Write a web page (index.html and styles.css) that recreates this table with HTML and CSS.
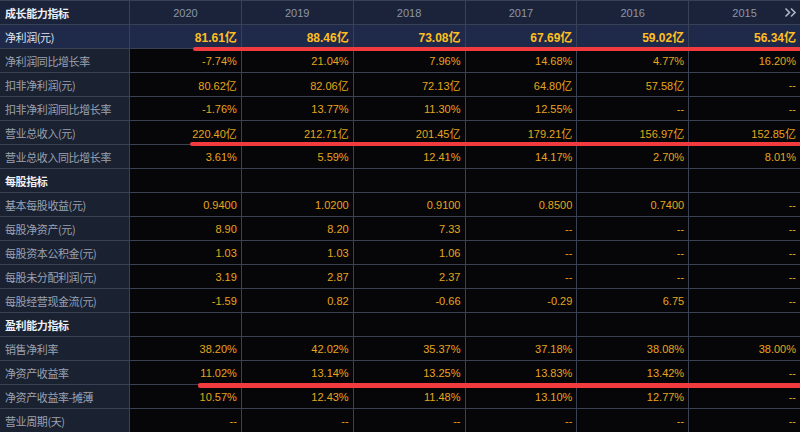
FILE: index.html
```html
<!DOCTYPE html>
<html lang="zh-CN">
<head>
<meta charset="utf-8">
<title>成长能力指标</title>
<link rel="stylesheet" href="styles.css">
</head>
<body>
<div class="board">
  <div class="grid">
    <div class="row head">
      <div class="lbl sec">成长能力指标</div>
      <div class="yr">2020</div><div class="yr">2019</div><div class="yr">2018</div><div class="yr">2017</div><div class="yr">2016</div>
      <div class="yr last">2015<span class="more"><svg width="13" height="11" viewBox="0 0 13 11"><path d="M1.5 1.5 L5.5 5.5 L1.5 9.5 M7 1.5 L11 5.5 L7 9.5" fill="none" stroke="#aeb6c6" stroke-width="1.6"/></svg></span></div>
    </div>
    <div class="row hl">
      <div class="lbl main">净利润(元)</div>
      <div class="v">81.61亿</div><div class="v">88.46亿</div><div class="v">73.08亿</div><div class="v">67.69亿</div><div class="v">59.02亿</div><div class="v">56.34亿</div>
    </div>
    <div class="row">
      <div class="lbl">净利润同比增长率</div>
      <div class="v">-7.74%</div><div class="v">21.04%</div><div class="v">7.96%</div><div class="v">14.68%</div><div class="v">4.77%</div><div class="v">16.20%</div>
    </div>
    <div class="row">
      <div class="lbl">扣非净利润(元)</div>
      <div class="v">80.62亿</div><div class="v">82.06亿</div><div class="v">72.13亿</div><div class="v">64.80亿</div><div class="v">57.58亿</div><div class="v">--</div>
    </div>
    <div class="row">
      <div class="lbl">扣非净利润同比增长率</div>
      <div class="v">-1.76%</div><div class="v">13.77%</div><div class="v">11.30%</div><div class="v">12.55%</div><div class="v">--</div><div class="v">--</div>
    </div>
    <div class="row">
      <div class="lbl">营业总收入(元)</div>
      <div class="v">220.40亿</div><div class="v">212.71亿</div><div class="v">201.45亿</div><div class="v">179.21亿</div><div class="v">156.97亿</div><div class="v">152.85亿</div>
    </div>
    <div class="row">
      <div class="lbl">营业总收入同比增长率</div>
      <div class="v">3.61%</div><div class="v">5.59%</div><div class="v">12.41%</div><div class="v">14.17%</div><div class="v">2.70%</div><div class="v">8.01%</div>
    </div>
    <div class="row">
      <div class="lbl sec">每股指标</div>
      <div class="v"></div><div class="v"></div><div class="v"></div><div class="v"></div><div class="v"></div><div class="v"></div>
    </div>
    <div class="row">
      <div class="lbl">基本每股收益(元)</div>
      <div class="v">0.9400</div><div class="v">1.0200</div><div class="v">0.9100</div><div class="v">0.8500</div><div class="v">0.7400</div><div class="v">--</div>
    </div>
    <div class="row">
      <div class="lbl">每股净资产(元)</div>
      <div class="v">8.90</div><div class="v">8.20</div><div class="v">7.33</div><div class="v">--</div><div class="v">--</div><div class="v">--</div>
    </div>
    <div class="row">
      <div class="lbl">每股资本公积金(元)</div>
      <div class="v">1.03</div><div class="v">1.03</div><div class="v">1.06</div><div class="v">--</div><div class="v">--</div><div class="v">--</div>
    </div>
    <div class="row">
      <div class="lbl">每股未分配利润(元)</div>
      <div class="v">3.19</div><div class="v">2.87</div><div class="v">2.37</div><div class="v">--</div><div class="v">--</div><div class="v">--</div>
    </div>
    <div class="row">
      <div class="lbl">每股经营现金流(元)</div>
      <div class="v">-1.59</div><div class="v">0.82</div><div class="v">-0.66</div><div class="v">-0.29</div><div class="v">6.75</div><div class="v">--</div>
    </div>
    <div class="row">
      <div class="lbl sec">盈利能力指标</div>
      <div class="v"></div><div class="v"></div><div class="v"></div><div class="v"></div><div class="v"></div><div class="v"></div>
    </div>
    <div class="row">
      <div class="lbl">销售净利率</div>
      <div class="v">38.20%</div><div class="v">42.02%</div><div class="v">35.37%</div><div class="v">37.18%</div><div class="v">38.08%</div><div class="v">38.00%</div>
    </div>
    <div class="row">
      <div class="lbl">净资产收益率</div>
      <div class="v">11.02%</div><div class="v">13.14%</div><div class="v">13.25%</div><div class="v">13.83%</div><div class="v">13.42%</div><div class="v">--</div>
    </div>
    <div class="row">
      <div class="lbl">净资产收益率-摊薄</div>
      <div class="v">10.57%</div><div class="v">12.43%</div><div class="v">11.48%</div><div class="v">13.10%</div><div class="v">12.77%</div><div class="v">--</div>
    </div>
    <div class="row">
      <div class="lbl">营业周期(天)</div>
      <div class="v">--</div><div class="v">--</div><div class="v">--</div><div class="v">--</div><div class="v">--</div><div class="v">--</div>
    </div>
  </div>
  <div class="mark mark1"></div>
  <div class="mark mark2"></div>
  <div class="mark mark3"></div>
</div>
</body>
</html>
```

FILE: styles.css
```css
* { box-sizing: border-box; }
html, body {
  margin: 0;
  padding: 0;
  background: #060609;
  width: 800px;
  height: 432px;
  overflow: hidden;
}
.board {
  position: relative;
  width: 800px;
  height: 432px;
  font-family: "Liberation Sans", "Noto Sans CJK SC", sans-serif;
}
.grid {
  display: flex;
  flex-direction: column;
  gap: 1px;
  padding-top: 1px;
  background: #394155;
  height: 432px;
}
.row {
  display: grid;
  grid-template-columns: 129px repeat(6, 1fr);
  column-gap: 1px;
  height: 23px;
}
.row > div {
  background: #060609;
  display: flex;
  align-items: center;
  white-space: nowrap;
  overflow: hidden;
}
.row > .lbl {
  background: #1a2131;
  color: #9aa2b2;
  font-family: "Noto Sans CJK SC", sans-serif;
  font-size: 11px;
  letter-spacing: -0.4px;
  padding-left: 5px;
}
.row > .lbl.sec {
  color: #eef0f4;
  font-weight: 700;
}
.row > .lbl.main {
  color: #dfe3ec;
}
.v {
  justify-content: flex-end;
  padding-right: 4px;
  color: #e6a51c;
  font-size: 11px;
}
.head > div { background: #1a233a; }
.row.head > .lbl { background: #1a233a; }
.yr {
  justify-content: center;
  color: #8c96a8;
  font-size: 11px;
  position: relative;
}
.more {
  position: absolute;
  right: 3px;
  top: 6px;
  display: flex;
}
.row.hl > div { background: #1f2a4b; }
.row.hl > .v {
  color: #ffbf1e;
  font-weight: 700;
  font-size: 12px;
}
.mark {
  position: absolute;
  right: 0;
  height: 4px;
  background: #f23b3f;
  border-radius: 2px 0 0 2px;
}
.mark1 { top: 47px; left: 193px; }
.mark2 { top: 142px; left: 190px; }
.mark3 { top: 383px; left: 198px; height: 5px; }
```
